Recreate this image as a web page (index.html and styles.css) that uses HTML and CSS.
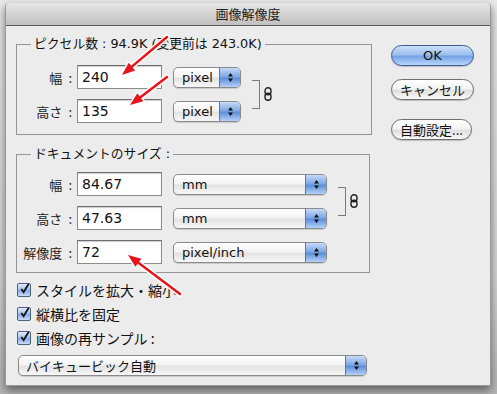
FILE: index.html
```html
<!DOCTYPE html>
<html lang="ja">
<head>
    <meta charset="UTF-8">
    <title>画像解像度</title>
    <link rel="stylesheet" href="styles.css">
</head>
<body>
    <div class="window">
        <div class="titlebar">画像解像度</div>
        <div class="content">
            <div class="left">
                <fieldset class="group group-pixels">
                    <legend>ピクセル数 : 94.9K (変更前は 243.0K)</legend>
                    <div class="rows">
                        <span class="label">幅<span class="colon">:</span></span>
                        <div class="field">240</div>
                        <div class="popup short"><span class="popup-text">pixel</span><span class="popup-arrows"><svg width="7" height="11" viewBox="0 0 7 11"><path d="M3.5 1 L6 4.5 L1 4.5 Z M1 6.5 L6 6.5 L3.5 10 Z" fill="#111"/></svg></span></div>
                        <div class="link">
                            <div class="bracket"></div>
                            <svg width="8" height="14" viewBox="0 0 8 14"><rect x="1" y="0.8" width="6" height="7" rx="3" fill="none" stroke="#222" stroke-width="1.4"/><rect x="1" y="6.2" width="6" height="7" rx="3" fill="none" stroke="#222" stroke-width="1.4"/></svg>
                        </div>
                        <span class="label">高さ<span class="colon">:</span></span>
                        <div class="field">135</div>
                        <div class="popup short"><span class="popup-text">pixel</span><span class="popup-arrows"><svg width="7" height="11" viewBox="0 0 7 11"><path d="M3.5 1 L6 4.5 L1 4.5 Z M1 6.5 L6 6.5 L3.5 10 Z" fill="#111"/></svg></span></div>
                    </div>
                </fieldset>

                <fieldset class="group group-doc">
                    <legend>ドキュメントのサイズ :</legend>
                    <div class="rows">
                        <span class="label">幅<span class="colon">:</span></span>
                        <div class="field">84.67</div>
                        <div class="popup wide"><span class="popup-text">mm</span><span class="popup-arrows"><svg width="7" height="11" viewBox="0 0 7 11"><path d="M3.5 1 L6 4.5 L1 4.5 Z M1 6.5 L6 6.5 L3.5 10 Z" fill="#111"/></svg></span></div>
                        <div class="link">
                            <div class="bracket"></div>
                            <svg width="8" height="14" viewBox="0 0 8 14"><rect x="1" y="0.8" width="6" height="7" rx="3" fill="none" stroke="#222" stroke-width="1.4"/><rect x="1" y="6.2" width="6" height="7" rx="3" fill="none" stroke="#222" stroke-width="1.4"/></svg>
                        </div>
                        <span class="label">高さ<span class="colon">:</span></span>
                        <div class="field">47.63</div>
                        <div class="popup wide"><span class="popup-text">mm</span><span class="popup-arrows"><svg width="7" height="11" viewBox="0 0 7 11"><path d="M3.5 1 L6 4.5 L1 4.5 Z M1 6.5 L6 6.5 L3.5 10 Z" fill="#111"/></svg></span></div>
                        <span class="label">解像度<span class="colon">:</span></span>
                        <div class="field">72</div>
                        <div class="popup wide"><span class="popup-text">pixel/inch</span><span class="popup-arrows"><svg width="7" height="11" viewBox="0 0 7 11"><path d="M3.5 1 L6 4.5 L1 4.5 Z M1 6.5 L6 6.5 L3.5 10 Z" fill="#111"/></svg></span></div>
                    </div>
                </fieldset>

                <div class="checks">
                    <div class="check-row"><span class="checkbox"><svg width="12" height="12" viewBox="0 0 12 12"><path d="M2.5 6 L5 9.5 L10.5 0.5" fill="none" stroke="#111" stroke-width="2"/></svg></span>スタイルを拡大・縮小</div>
                    <div class="check-row"><span class="checkbox"><svg width="12" height="12" viewBox="0 0 12 12"><path d="M2.5 6 L5 9.5 L10.5 0.5" fill="none" stroke="#111" stroke-width="2"/></svg></span>縦横比を固定</div>
                    <div class="check-row"><span class="checkbox"><svg width="12" height="12" viewBox="0 0 12 12"><path d="M2.5 6 L5 9.5 L10.5 0.5" fill="none" stroke="#111" stroke-width="2"/></svg></span>画像の再サンプル :</div>
                </div>

                <div class="popup full"><span class="popup-text">バイキュービック自動</span><span class="popup-arrows"><svg width="7" height="11" viewBox="0 0 7 11"><path d="M3.5 1 L6 4.5 L1 4.5 Z M1 6.5 L6 6.5 L3.5 10 Z" fill="#111"/></svg></span></div>
            </div>

            <div class="buttons">
                <button class="btn default">OK</button>
                <button class="btn">キャンセル</button>
                <button class="btn auto">自動設定...</button>
            </div>
        </div>
    </div>

    <!-- red annotation arrows drawn over the dialog -->
    <svg class="arrows" width="497" height="394" viewBox="0 0 497 394">
        <g stroke="#fff" stroke-width="5.5" stroke-linecap="round" fill="#fff" stroke-linejoin="round">
            <line x1="167" y1="37" x2="131.9" y2="66.6"/>
            <polygon points="122,75 135.1,70.4 128.7,62.8" stroke-width="3"/>
            <line x1="167" y1="77" x2="140.4" y2="97.2"/>
            <polygon points="130,105 143.4,101.2 137.4,93.2" stroke-width="3"/>
            <line x1="180" y1="294" x2="138.4" y2="262.8"/>
            <polygon points="128,255 141.4,258.8 135.4,266.8" stroke-width="3"/>
        </g>
        <g stroke="#e8141b" stroke-width="2.5" stroke-linecap="round" fill="#e8141b">
            <line x1="167" y1="37" x2="131.9" y2="66.6"/>
            <polygon points="122,75 135.1,70.4 128.7,62.8" stroke="none"/>
            <line x1="167" y1="77" x2="140.4" y2="97.2"/>
            <polygon points="130,105 143.4,101.2 137.4,93.2" stroke="none"/>
            <line x1="180" y1="294" x2="138.4" y2="262.8"/>
            <polygon points="128,255 141.4,258.8 135.4,266.8" stroke="none"/>
        </g>
    </svg>
</body>
</html>
```

FILE: styles.css
```css
body {
    margin: 0;
    width: 497px;
    height: 394px;
    position: relative;
    overflow: hidden;
    background: linear-gradient(#e9e9e9, #d6d6d6 70%, #b5b5b5);
    font-family: "DejaVu Sans", "Noto Sans CJK JP", sans-serif;
    font-size: 13px;
    color: #111;
}
.window {
    margin: 3px 0 0 5px;
    width: 486px;
    height: 383px;
    box-sizing: border-box;
    background-color: #ececec;
    border: 1px solid #9a9a9a;
    border-top: none;
    border-radius: 4px 4px 0 0;
    box-shadow: 0 4px 10px rgba(0, 0, 0, 0.5);
}
.titlebar {
    height: 22px;
    line-height: 22px;
    text-align: center;
    font-family: "Noto Sans CJK JP", sans-serif;
    font-size: 13px;
    color: #222;
    background: linear-gradient(#e6e6e6, #c0c0c0);
    border-bottom: 1px solid #5c5c5c;
    border-radius: 4px 4px 0 0;
}
.content {
    display: flex;
    padding: 0 15px 0 10px;
}
.left {
    width: 356px;
}
.group {
    margin: 0;
    padding: 0;
    border: 1px solid #959595;
    min-width: 0;
}
.group legend {
    margin-left: 14px;
    padding: 0 3px;
    line-height: 16px;
    font-family: "DejaVu Sans", "Noto Sans CJK JP", sans-serif;
    font-size: 12.8px;
}
.group-pixels {
    margin-top: 10px;
    padding: 13px 0 11px;
}
.group-doc {
    margin-top: 11px;
    width: 354px;
    box-sizing: border-box;
    padding: 10px 0 8px;
}
.rows {
    display: grid;
    grid-template-columns: 56px 89px auto 1fr;
    grid-auto-rows: 24px;
    row-gap: 10px;
    align-items: center;
}
.label {
    text-align: right;
    font-family: "Noto Sans CJK JP", sans-serif;
    white-space: nowrap;
    color: #222;
}
.colon {
    margin-left: 6px;
    margin-right: 1px;
}
.field {
    margin-left: 4px;
    height: 24px;
    box-sizing: border-box;
    background-color: #fff;
    border: 1px solid #8c8c8c;
    border-top-color: #6e6e6e;
    box-shadow: inset 0 1px 1px rgba(0, 0, 0, 0.2);
    padding-left: 4px;
    line-height: 22px;
    font-size: 14px;
}
.popup {
    display: flex;
    height: 21px;
    box-sizing: border-box;
    border: 1px solid #8a8a8a;
    border-radius: 5px;
    background: linear-gradient(#ffffff, #f3f3f3 45%, #e3e3e3 55%, #f7f7f7);
    box-shadow: 0 1px 1px rgba(0, 0, 0, 0.15);
}
.rows .popup {
    margin-left: 11px;
}
.popup.short {
    width: 68px;
}
.popup.wide {
    width: 154px;
}
.popup.full {
    width: 349px;
    margin: 5px 0 0 2px;
}
.popup-text {
    flex: 1;
    padding-left: 8px;
    line-height: 19px;
}
.popup.full .popup-text {
    font-family: "Noto Sans CJK JP", sans-serif;
    padding-left: 7px;
}
.popup-arrows {
    width: 20px;
    display: flex;
    align-items: center;
    justify-content: center;
    border-left: 1px solid #5d74a8;
    border-radius: 0 4px 4px 0;
    background: linear-gradient(#c6dbf7, #7fa8e6 45%, #5f8fdc 55%, #b4d2f7);
}
.link {
    grid-row: 1 / span 2;
    grid-column: 4;
    display: flex;
    align-items: center;
    margin-left: 11px;
    gap: 4px;
}
.bracket {
    width: 7px;
    height: 27px;
    border: 1.5px solid #7a7a7a;
    border-left: none;
}
.checks {
    margin-top: 5px;
}
.check-row {
    display: flex;
    align-items: center;
    height: 24px;
    font-family: "Noto Sans CJK JP", sans-serif;
    font-size: 14px;
}
.checkbox {
    width: 14px;
    height: 14px;
    box-sizing: border-box;
    margin: 0 5px 0 1px;
    border: 1px solid #4d5f82;
    border-radius: 2px;
    background: linear-gradient(#e4eefb, #9fbde8 50%, #86aae2 55%, #c9ddf7);
    display: flex;
    align-items: flex-end;
    justify-content: center;
}
.checkbox svg {
    margin-bottom: 1px;
    margin-left: 1px;
}
.buttons {
    margin-left: 19px;
    padding-top: 19px;
    display: flex;
    flex-direction: column;
    width: 83px;
}
.btn {
    height: 21px;
    padding: 0;
    border: 1px solid #6e6e6e;
    border-radius: 11px;
    background: linear-gradient(#ffffff, #f2f2f2 45%, #e0e0e0 55%, #f8f8f8);
    font-family: "Noto Sans CJK JP", sans-serif;
    font-size: 13px;
    color: #111;
    margin-bottom: 13px;
    box-shadow: 0 1px 1px rgba(0, 0, 0, 0.2);
}
.btn.default {
    border-color: #3e5b95;
    background: linear-gradient(#cfe1f9, #9cbfee 45%, #76a3e6 55%, #b6d6fa);
    font-family: "DejaVu Sans", sans-serif;
}
.btn.auto {
    margin-top: 6px;
    width: 81px;
}
.arrows {
    position: absolute;
    top: 0;
    left: 0;
}
```
